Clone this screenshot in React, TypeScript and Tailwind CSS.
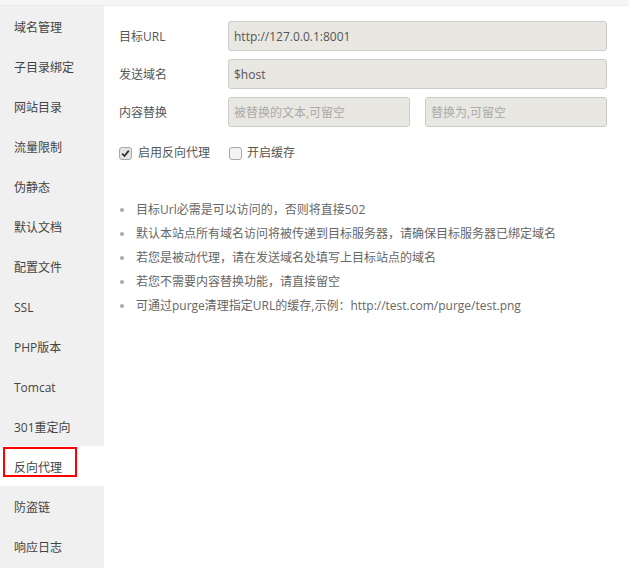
import React from "react";

const menu = [
  "域名管理",
  "子目录绑定",
  "网站目录",
  "流量限制",
  "伪静态",
  "默认文档",
  "配置文件",
  "SSL",
  "PHP版本",
  "Tomcat",
  "301重定向",
  "反向代理",
  "防盗链",
  "响应日志",
];

const tips = [
  "目标Url必需是可以访问的，否则将直接502",
  "默认本站点所有域名访问将被传递到目标服务器，请确保目标服务器已绑定域名",
  "若您是被动代理，请在发送域名处填写上目标站点的域名",
  "若您不需要内容替换功能，请直接留空",
  "可通过purge清理指定URL的缓存,示例：http://test.com/purge/test.png",
];

const inputCls =
  "h-[30px] rounded-[3px] border border-[#cccccc] bg-[#e8e7e1] px-[5px] text-[12px] text-[#555] outline-none placeholder:text-[#aaa]";

export default function App() {
  return (
    <div
      className="w-[629px] h-[568px] overflow-hidden bg-white flex flex-col text-[12px] text-[#555]"
      style={{ fontFamily: '"Open Sans", "Noto Sans CJK SC", sans-serif' }}
    >
      <div className="h-[6px] bg-[#f6f6f6] border-b border-[#ececec] shrink-0" />
      <div className="flex flex-1 min-h-0">
        <div className="w-[104px] bg-[#f0f0f0] flex flex-col shrink-0">
          {menu.map((m) => {
            const active = m === "反向代理";
            return (
              <div
                key={m}
                className={`h-[40px] shrink-0 flex items-start ${active ? "bg-white" : ""}`}
              >
                {active ? (
                  <div className="mt-[1px] ml-[3px] w-[74px] h-[30px] border-2 border-[#ff0000] flex items-center pl-[9px] pt-[12px] text-[#444]">
                    {m}
                  </div>
                ) : (
                  <div className="h-[40px] flex items-center pl-[14px] pt-[3px] text-[#444]">{m}</div>
                )}
              </div>
            );
          })}
        </div>
        <div className="flex-1 pl-[15px] pt-[15px] pr-[22px]">
          <div className="flex flex-col gap-[8px]">
            <div className="flex items-center">
              <div className="w-[109px] text-[#555] pt-[1px]">目标URL</div>
              <input className={`${inputCls} flex-1`} defaultValue="http://127.0.0.1:8001" />
            </div>
            <div className="flex items-center">
              <div className="w-[109px] text-[#555] pt-[1px]">发送域名</div>
              <input className={`${inputCls} flex-1`} defaultValue="$host" />
            </div>
            <div className="flex items-center">
              <div className="w-[109px] text-[#555] pt-[1px]">内容替换</div>
              <div className="flex flex-1 gap-[15px]">
                <input className={`${inputCls} w-[182px]`} placeholder="被替换的文本,可留空" />
                <input className={`${inputCls} flex-1`} placeholder="替换为,可留空" />
              </div>
            </div>
          </div>
          <div className="flex items-center mt-[19px] h-[14px]">
            <span className="w-[13px] h-[13px] rounded-[3px] border border-[#a8a8a8] bg-[#e4e4e4] flex items-center justify-center">
              <svg width="9" height="9" viewBox="0 0 9 9">
                <path d="M1.2 4.6 L3.5 7 L7.8 1.6" stroke="#333" strokeWidth="1.8" fill="none" />
              </svg>
            </span>
            <span className="ml-[6px] text-[#555]">启用反向代理</span>
            <span className="ml-[19px] w-[13px] h-[13px] rounded-[3px] border border-[#a8a8a8] bg-[#f3f3f3]" />
            <span className="ml-[5px] text-[#555]">开启缓存</span>
          </div>
          <ul className="mt-[38px] flex flex-col">
            {tips.map((t) => (
              <li key={t} className="h-[24px] flex items-center text-[#666]">
                <span className="w-[4px] h-[4px] rounded-full bg-[#aaa] ml-[1px] mr-[12px]" />
                {t}
              </li>
            ))}
          </ul>
        </div>
      </div>
    </div>
  );
}
